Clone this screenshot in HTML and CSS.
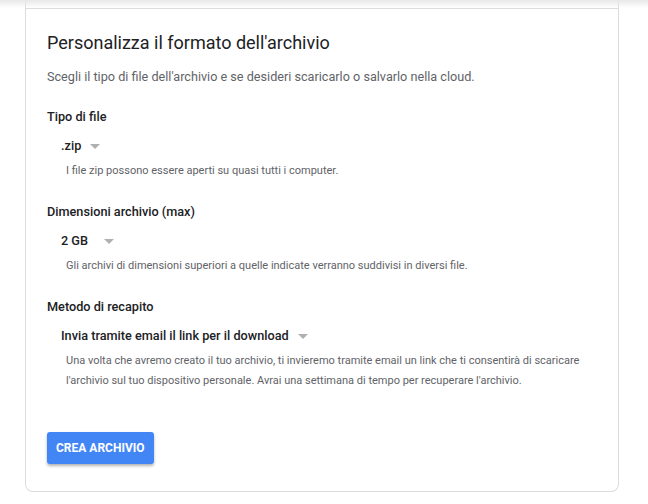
FILE: index.html
```html
<!DOCTYPE html>
<html>
<head>
  <title>Personalizza il formato dell'archivio</title>
  <link rel="stylesheet" href="styles.css">
</head>
<body>
  <div class="topshade"></div>

  <section class="card">
    <div class="divider"></div>

    <h2 class="title">Personalizza il formato dell'archivio</h2>
    <p class="intro">Scegli il tipo di file dell'archivio e se desideri scaricarlo o salvarlo nella cloud.</p>

    <!-- tipo di file -->
    <div class="field">
      <h3 class="label">Tipo di file</h3>
      <div class="select">.zip <span class="caret"></span></div>
      <p class="help">I file zip possono essere aperti su quasi tutti i computer.</p>
    </div>

    <div class="field">
      <h3 class="label">Dimensioni archivio (max)</h3>
      <div class="select">2 GB <span class="caret wide"></span></div>
      <p class="help">Gli archivi di dimensioni superiori a quelle indicate verranno suddivisi in diversi file.</p>
    </div>

    <div class="field">
      <h3 class="label">Metodo di recapito</h3>
      <div class="select">Invia tramite email il link per il download <span class="caret"></span></div>
      <p class="help">Una volta che avremo creato il tuo archivio, ti invieremo tramite email un link che ti consentirà di scaricare l'archivio sul tuo dispositivo personale. Avrai una settimana di tempo per recuperare l'archivio.</p>
    </div>

    <button class="create">CREA ARCHIVIO</button>
  </section>
</body>
</html>
```

FILE: styles.css
```css
body {
  margin: 0;
  padding: 0;
  background-color: #ffffff;
  font-family: Roboto, Arial, sans-serif;
  color: #202124;
}

.topshade {
  position: absolute;
  top: 0;
  left: 0;
  right: 0;
  height: 8px;
  background: linear-gradient(#e8e8e8, rgba(255, 255, 255, 0));
  pointer-events: none;
}

.card {
  width: 592px;
  margin: 0 0 0 25px;
  padding: 0 0 27px 0;
  border: 1px solid #dadce0;
  border-top: none;
  border-radius: 0 0 8px 8px;
}

.divider {
  height: 8px;
  border-bottom: 1px solid #dadce0;
}

.title {
  margin: 22px 0 0 21px;
  font-size: 18px;
  font-weight: 400;
  line-height: 24px;
}

.intro {
  margin: 12px 0 0 21px;
  font-size: 12.65px;
  line-height: 20px;
  color: #5f6368;
}

.field {
  margin: 20px 0 0 21px;
}

.field + .field {
  margin-top: 21px;
}

.label {
  margin: 0;
  font-size: 12.7px;
  font-weight: 500;
  line-height: 20px;
}

.select {
  margin: 9px 0 0 14px;
  font-size: 12.7px;
  font-weight: 500;
  line-height: 20px;
  display: flex;
  align-items: center;
}

.caret {
  width: 0;
  height: 0;
  margin-left: 9px;
  border-left: 5px solid transparent;
  border-right: 5px solid transparent;
  border-top: 5px solid #b0b0b0;
}

.caret.wide {
  margin-left: 16px;
}

.help {
  margin: 5px 0 0 19px;
  font-size: 11px;
  line-height: 20px;
  color: #5f6368;
  max-width: 530px;
}

.create {
  margin: 41px 0 0 21px;
  height: 32px;
  padding: 0 9px;
  background-color: #4285f4;
  color: white;
  border: none;
  border-radius: 3px;
  font-family: Roboto, Arial, sans-serif;
  font-size: 12px;
  font-weight: 700;
  box-shadow: 0 2px 3px rgba(0, 0, 0, 0.3);
}
```
